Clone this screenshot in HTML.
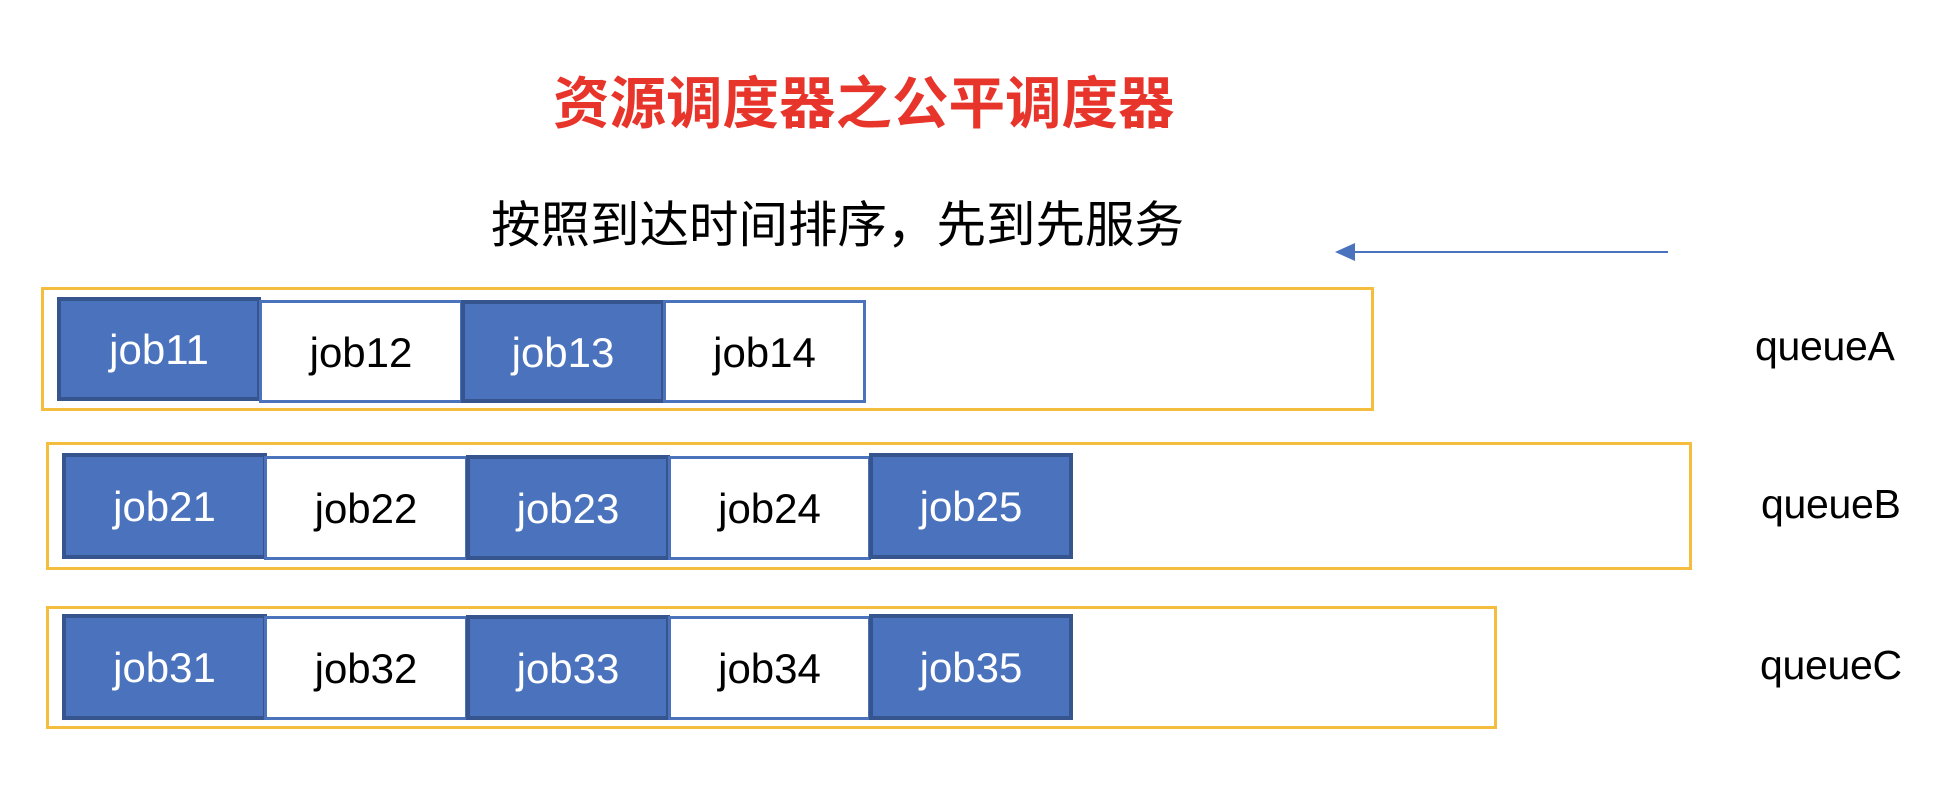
<!DOCTYPE html>
<html><head><meta charset="utf-8"><style>
*{margin:0;padding:0;box-sizing:border-box}
body{width:1958px;height:799px;background:#fff;position:relative;overflow:hidden;font-family:"Liberation Sans","Noto Sans CJK SC",sans-serif}
.a{position:absolute}
.q{position:absolute;border:3px solid #F5BD3E}
.j{position:absolute;display:flex;align-items:center;justify-content:center;font-size:42px;letter-spacing:0px;padding-top:2px}
.d{background:#4A72BD;border:4px solid #36558F;color:#fff}
.w{background:#fff;border:3px solid #4A72BD;color:#000}
.lbl{position:absolute;font-size:41px;letter-spacing:-0.3px;line-height:1;color:#000}
</style></head><body>
<div class="a" style="left:553px;top:72px;font-size:56.5px;font-weight:bold;color:#E8352B;line-height:64px;white-space:nowrap">资源调度器之公平调度器</div>
<div class="a" style="left:491px;top:196px;font-size:49.5px;color:#000;line-height:60px;white-space:nowrap">按照到达时间排序，先到先服务</div>
<svg class="a" style="left:1335px;top:240px" width="340" height="24"><line x1="12" y1="12" x2="333" y2="12" stroke="#4A72BD" stroke-width="2"/><polygon points="0,12 20,3 20,21" fill="#4A72BD"/></svg>

<div class="q" style="left:41px;top:287px;width:1333px;height:124px"></div>
<div class="j d" style="left:57px;top:297px;width:204px;height:104px">job11</div>
<div class="j w" style="left:259px;top:300px;width:204px;height:103px">job12</div>
<div class="j d" style="left:461px;top:300px;width:204px;height:103px">job13</div>
<div class="j w" style="left:663px;top:300px;width:203px;height:103px">job14</div>
<div class="lbl" style="left:1755px;top:326px">queueA</div>

<div class="q" style="left:46px;top:442px;width:1646px;height:128px"></div>
<div class="j d" style="left:62px;top:453px;width:205px;height:106px">job21</div>
<div class="j w" style="left:264px;top:456px;width:204px;height:104px">job22</div>
<div class="j d" style="left:466px;top:455px;width:204px;height:105px">job23</div>
<div class="j w" style="left:668px;top:456px;width:203px;height:104px">job24</div>
<div class="j d" style="left:869px;top:453px;width:204px;height:106px">job25</div>
<div class="lbl" style="left:1761px;top:484px">queueB</div>

<div class="q" style="left:46px;top:606px;width:1451px;height:123px"></div>
<div class="j d" style="left:62px;top:614px;width:205px;height:106px">job31</div>
<div class="j w" style="left:264px;top:616px;width:204px;height:104px">job32</div>
<div class="j d" style="left:466px;top:615px;width:204px;height:105px">job33</div>
<div class="j w" style="left:668px;top:616px;width:203px;height:104px">job34</div>
<div class="j d" style="left:869px;top:614px;width:204px;height:106px">job35</div>
<div class="lbl" style="left:1760px;top:645px">queueC</div>
</body></html>
